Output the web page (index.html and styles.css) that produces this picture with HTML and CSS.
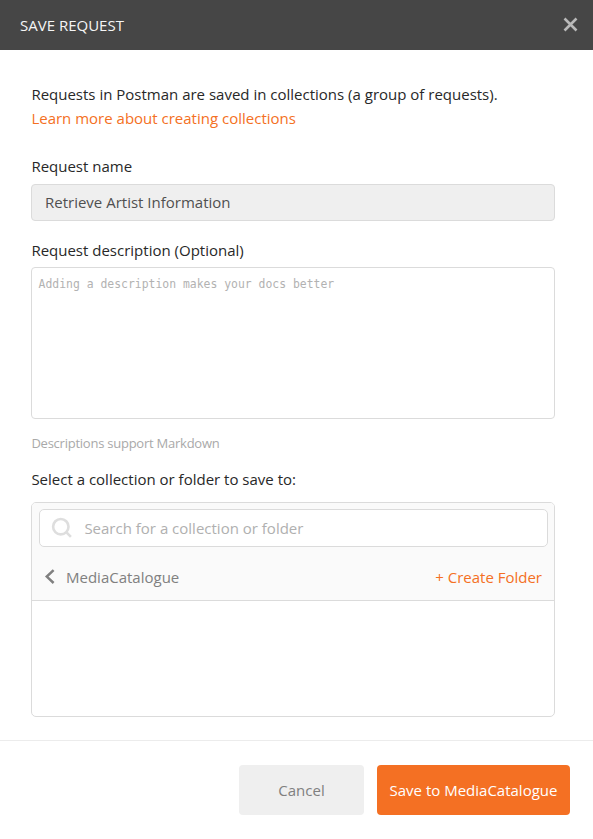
FILE: index.html
```
<!DOCTYPE html>
<html lang="en">
<head>
<meta charset="utf-8">
<title>Save Request</title>
<link rel="stylesheet" href="styles.css">
</head>
<body>
<div class="modal">
  <header class="modal-header">
    <h1 class="modal-title">SAVE REQUEST</h1>
    <svg class="close-icon" width="16" height="16" viewBox="0 0 16 16"><path d="M2.5 1.5L14.5 13.5M14.5 1.5L2.5 13.5"/></svg>
  </header>
  <main class="modal-body">
    <p class="intro"><span class="t-intro">Requests in Postman are saved in collections (a group of requests).</span><br><a class="link t-link">Learn more about creating collections</a></p>
    <label class="label"><span class="t-name">Request name</span></label>
    <div class="field name-field"><span class="t-value">Retrieve Artist Information</span></div>
    <label class="label"><span class="t-desc">Request description (Optional)</span></label>
    <div class="field description-field"><span class="t-mono">Adding a description makes your docs better</span></div>
    <p class="hint"><span class="t-hint">Descriptions support Markdown</span></p>
    <label class="label"><span class="t-select">Select a collection or folder to save to:</span></label>
    <section class="picker">
      <div class="picker-head">
        <div class="search">
          <svg class="search-icon" width="22" height="22" viewBox="0 0 22 22"><circle cx="9.8" cy="9.7" r="7.7"/><path d="M15.2 15.2L19.9 19.9"/></svg>
          <span class="t-search">Search for a collection or folder</span>
        </div>
        <div class="crumb">
          <svg class="back-icon" width="12" height="16" viewBox="0 0 12 16"><path d="M9.6 1.2L2.8 7.6L9.6 14"/></svg>
          <span class="crumb-name t-crumb">MediaCatalogue</span>
          <a class="link t-create">+ Create Folder</a>
        </div>
      </div>
    </section>
  </main>
  <footer class="modal-footer">
    <button class="button cancel"><span class="t-cancel">Cancel</span></button>
    <button class="button save"><span class="t-save">Save to MediaCatalogue</span></button>
  </footer>
</div>
</body>
</html>
```
FILE: styles.css
```
* { box-sizing: border-box; }
body {
  margin: 0;
  background: #fff;
  color: #282828;
  font: 15px/24px "Open Sans", sans-serif;
}
p, h1 { margin: 0; }
.modal { display: flex; flex-direction: column; height: 839px; }
.modal-header {
  display: flex;
  align-items: center;
  justify-content: space-between;
  height: 50px;
  padding: 0 15px 0 20px;
  background: #464646;
}
.modal-title { font-size: 15px; font-weight: 400; color: #f5f5f5; }
.close-icon { fill: none; stroke: #b9b9b9; stroke-width: 2.6; }
.modal-body { height: 690px; padding: 32px 38px 0 31px; }
.link { color: #f47023; }
.intro { margin-bottom: 24px; }
.intro, .label, .hint { padding-left: 0.4px; }
.label { display: block; }
.field {
  border: 1px solid #dbdbdb;
  border-radius: 4px;
}
.name-field {
  height: 37px;
  margin: 6px 0 17px;
  padding: 5px 13px;
  background: #efefef;
  color: #505050;
}
.description-field {
  height: 152px;
  margin: 5px 0 12px;
  padding: 4px 6.5px;
  color: #b2b2b2;
  font: 11.43px/24px "DejaVu Sans Mono", monospace;
}
.hint { margin-bottom: 12px; color: #a9a9a9; font-size: 13px; letter-spacing: -0.24px; }
.picker {
  height: 215px;
  margin-top: 11px;
  border: 1px solid #dbdbdb;
  border-radius: 5px;
  overflow: hidden;
}
.picker-head {
  height: 98px;
  padding: 6px 6px 0 7px;
  border-bottom: 1px solid #dbdbdb;
  background: #fafafa;
}
.search {
  display: flex;
  align-items: center;
  gap: 11.4px;
  height: 38px;
  padding-left: 11px;
  border: 1px solid #dbdbdb;
  border-radius: 5px;
  background: #fff;
  color: #b0b0b0;
}
.search-icon { fill: none; stroke: #dedede; stroke-width: 2.6; }
.crumb {
  display: flex;
  align-items: center;
  height: 24px;
  margin-top: 18px;
  padding: 0 6px 0 5px;
  color: #808080;
}
.back-icon { fill: none; stroke: #808080; stroke-width: 2.5; }
.crumb-name { margin: 0 auto 0 10px; }
.modal-footer {
  display: flex;
  justify-content: flex-end;
  gap: 13px;
  height: 99px;
  padding: 24px 23px 0 0;
  border-top: 1px solid #ececec;
}
.button {
  height: 50px;
  padding: 0;
  border: 0;
  border-radius: 4px;
  font: inherit;
  white-space: nowrap;
}
.cancel { width: 125px; background: #efefef; color: #808080; }
.save { width: 193px; background: #f47023; color: #fff; }
```
